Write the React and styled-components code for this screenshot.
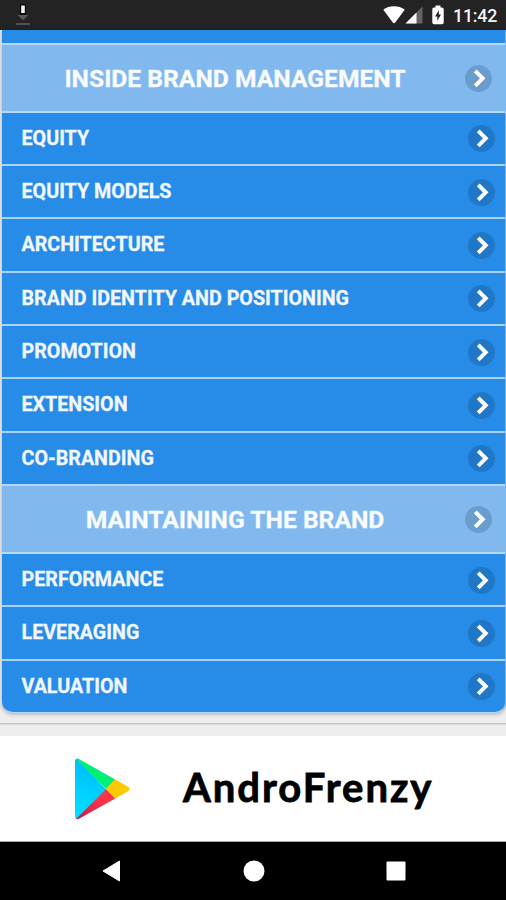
import styled, { createGlobalStyle, css } from 'styled-components';
import React from 'react';

const GlobalStyle = createGlobalStyle`
  * {
    box-sizing: border-box;
    margin: 0;
    padding: 0;
  }

  body {
    font-family: Roboto, 'Liberation Sans', sans-serif;
    background-color: #eee;
  }
`;

const Screen = styled.div`
  width: 506px;
  height: 900px;
  display: flex;
  flex-direction: column;
  overflow: hidden;
`;

const StatusBar = styled.header`
  height: 30px;
  flex-shrink: 0;
  display: flex;
  align-items: center;
  padding: 0 9px 0 15px;
  background-color: #232323;

  svg {
    display: block;
  }
`;

const StatusIcons = styled.div`
  margin-left: auto;
  display: flex;
  align-items: center;
`;

const BatteryWrap = styled.span`
  margin-left: 9px;
`;

const Clock = styled.span`
  width: 44px;
  margin-left: 9px;
  padding-top: 2px;
  font-size: 17.8px;
  line-height: 22px;
  font-weight: 500;
  letter-spacing: -0.2px;
  color: #f4f4f4;
`;

const Content = styled.main`
  height: 706px;
  flex-shrink: 0;
  background-color: #eee;
`;

const List = styled.ul`
  height: 683px;
  margin: 0 0 0 2px;
  list-style: none;
  overflow: hidden;
  background-color: #278ce8;
  border-right: 1px solid #77b7f2;
  border-bottom: 1px solid #b7d7f5;
  border-radius: 0 0 11px 11px;
  box-shadow: 0 1px 4px rgba(0, 0, 0, 0.3);
`;

const Peek = styled.li`
  height: 12.5px;
  background-color: #278ce8;
`;

const Row = styled.li`
  height: 53.35px;
  display: flex;
  align-items: center;
  padding: 0 10px 0 19.5px;
  border-top: 2px solid #a9d0f6;
  color: #fff;

  ${({ $divider }) =>
    $divider &&
    css`
      height: 68.1px;
      padding: 0 13px 0 3px;
      background-color: #81b9ef;
      border-top-color: #b6d7f7;
    `}

  ${({ $afterDivider }) =>
    $afterDivider &&
    css`
      border-top-color: #b6d9f9;
    `}
`;

const Label = styled.span`
  flex: 1;
  padding-top: 0.5px;
  font-size: 19.7px;
  line-height: 24px;
  font-weight: 700;
  white-space: nowrap;
  color: #f1f7fe;
  -webkit-text-stroke: 0.3px #f1f7fe;

  ${({ $divider }) =>
    $divider &&
    css`
      padding-top: 2px;
      font-size: 24.65px;
      line-height: 30px;
      text-align: center;
      color: #fafcff;
    `}
`;

const Badge = styled.span`
  width: 27px;
  height: 27px;
  flex-shrink: 0;
  margin-top: 1px;
  border-radius: 50%;
  background-color: ${({ $divider }) => ($divider ? '#6a9dcd' : '#2077c7')};

  svg {
    display: block;
  }
`;

const Rule = styled.hr`
  height: 2px;
  margin-top: 10px;
  border: 0;
  background-color: #c8c8c8;
  border-bottom: 1px solid #d9d9d9;
`;

const Banner = styled.section`
  height: 106px;
  flex-shrink: 0;
  display: flex;
  align-items: center;
  padding-left: 74px;
  background-color: #fff;
  border-bottom: 1px solid #aaa;
`;

const BrandName = styled.span`
  margin: 0 0 4px 53px;
  font-family: Lato, sans-serif;
  font-size: 40px;
  line-height: 48px;
  font-weight: 700;
  letter-spacing: 2px;
  color: #000;
  -webkit-text-stroke: 0.8px #000;
`;

const NavBar = styled.nav`
  height: 58px;
  flex-shrink: 0;
  display: grid;
  grid-template-columns: repeat(3, 142px);
  justify-content: center;
  align-items: center;
  padding-left: 1px;
  background-color: #000;

  svg {
    display: block;
    margin: 0 auto;
  }
`;

const items = [
  { text: 'INSIDE BRAND MANAGEMENT', divider: true },
  { text: 'EQUITY' },
  { text: 'EQUITY MODELS' },
  { text: 'ARCHITECTURE' },
  { text: 'BRAND IDENTITY AND POSITIONING' },
  { text: 'PROMOTION' },
  { text: 'EXTENSION' },
  { text: 'CO-BRANDING' },
  { text: 'MAINTAINING THE BRAND', divider: true },
  { text: 'PERFORMANCE' },
  { text: 'LEVERAGING' },
  { text: 'VALUATION' },
];

const DownloadIcon = () => (
  <svg width="16" height="24" viewBox="0 0 16 24">
    <path d="M5 1h6v11H5z" fill="#090909" />
    <path d="M6.2 2.5h3.6v7.5H6.2z" fill="#f5f5f5" />
    <path d="M2.5 12h11L8 17.3z" fill="#5a5a5a" />
    <path d="M1 20h14v2H1z" fill="#505050" />
  </svg>
);

const WifiIcon = () => (
  <svg width="22" height="18" viewBox="0 0 22 18">
    <path
      d="M0.3 3.8C6-0.8 16-0.8 21.7 3.8L12.2 16.6q-1.2 1.4-2.4 0z"
      fill="#fff"
    />
  </svg>
);

const SignalIcon = () => (
  <svg width="18" height="18" viewBox="0 0 18 18">
    <path d="M0.5 17.5L17.5 0.5v17z" fill="#646464" />
    <path d="M0.5 17.5L11.5 6.5v11z" fill="#fff" />
  </svg>
);

const BatteryIcon = () => (
  <svg width="12" height="20" viewBox="0 0 12 20">
    <path
      d="M3.5 0.5h5v2H10q1.7 0 1.7 1.7V17.5q0 1.7-1.7 1.7H2Q0.3 19.2 0.3 17.5V4.2Q0.3 2.5 2 2.5h1.5z"
      fill="#fff"
    />
    <path d="M6.9 5.2L3 11.5h2.3v4.3L9 9.5H6.9z" fill="#232323" />
  </svg>
);

const ChevronIcon = () => (
  <svg width="27" height="27" viewBox="0 0 27 27">
    <path
      d="M10.2 5.8L17.7 13.3L10.2 20.8"
      fill="none"
      stroke="#fff"
      strokeWidth="4"
    />
  </svg>
);

const PlayLogo = () => (
  <svg width="56" height="62" viewBox="0 0 56 62">
    <defs>
      <linearGradient id="blue" x1="0.4" y1="0" x2="0.2" y2="1">
        <stop offset="0" stopColor="#00bbff" />
        <stop offset="1" stopColor="#00e2ff" />
      </linearGradient>
      <linearGradient id="red" x1="1" y1="0" x2="0" y2="1">
        <stop offset="0.4" stopColor="#fb3448" />
        <stop offset="1" stopColor="#c4144f" />
      </linearGradient>
    </defs>
    <path d="M1 3Q1 0.7 3 0.8L32.3 31.5L3 61Q1 61 1 59z" fill="url(#blue)" />
    <path d="M2 1Q3.4 0.2 5 1L41.2 21.5L32.2 31z" fill="#00ef76" />
    <path d="M2 61Q3.4 61.8 5 60.8L41.2 40.5L32.2 31z" fill="url(#red)" />
    <path
      d="M41 21.3L53.7 28.5Q57.5 31 53.7 33.4L41 40.6L32 31z"
      fill="#ffc900"
    />
  </svg>
);

const App = () => {
  return (
    <>
      <GlobalStyle />
      <Screen>
        <StatusBar>
          <DownloadIcon />
          <StatusIcons>
            <WifiIcon />
            <SignalIcon />
            <BatteryWrap>
              <BatteryIcon />
            </BatteryWrap>
            <Clock>11:42</Clock>
          </StatusIcons>
        </StatusBar>
        <Content>
          <List>
            <Peek />
            {items.map(({ text, divider }, i) => (
              <Row
                key={text}
                $divider={divider}
                $afterDivider={items[i - 1]?.divider}
              >
                <Label $divider={divider}>{text}</Label>
                <Badge $divider={divider}>
                  <ChevronIcon />
                </Badge>
              </Row>
            ))}
          </List>
          <Rule />
        </Content>
        <Banner>
          <PlayLogo />
          <BrandName>AndroFrenzy</BrandName>
        </Banner>
        <NavBar>
          <svg width="20" height="22" viewBox="0 0 20 22">
            <path d="M17.5 1v20L1 11z" fill="#fff" stroke="#fff" />
          </svg>
          <svg width="22" height="22" viewBox="0 0 22 22">
            <circle cx="11" cy="11" r="10.5" fill="#fff" />
          </svg>
          <svg width="20" height="20" viewBox="0 0 20 20">
            <rect x="0.5" y="0.5" width="19" height="19" rx="1" fill="#fff" />
          </svg>
        </NavBar>
      </Screen>
    </>
  );
};

export default App;
